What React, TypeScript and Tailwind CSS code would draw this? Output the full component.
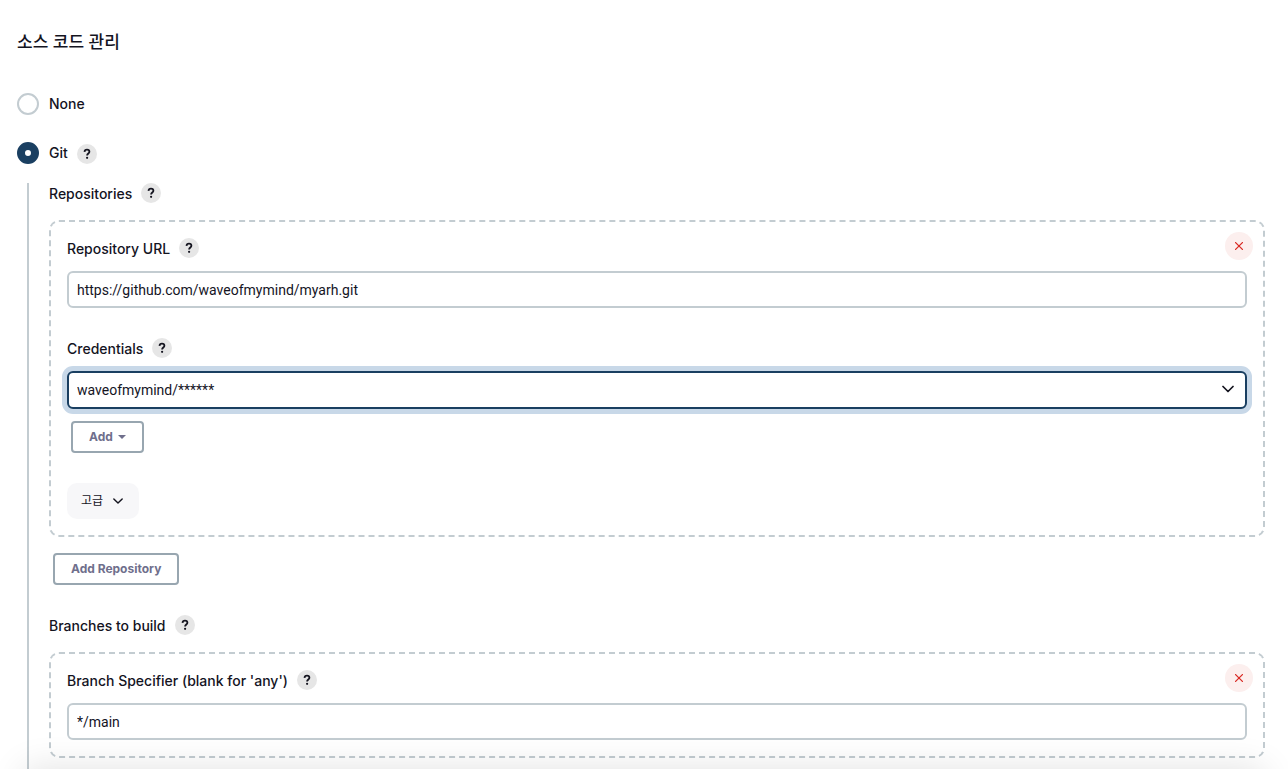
import { useState } from 'react';
import type { ReactNode } from 'react';

function HelpButton({ topic }: { topic: string }) {
  return (
    <button
      type="button"
      aria-label={`Help for feature: ${topic}`}
      className="flex h-5 w-5 items-center justify-center rounded-full bg-[#e6e6e6] text-[#14141f]"
    >
      <svg viewBox="0 0 20 20" className="h-5 w-5" fill="none" stroke="currentColor" strokeWidth="1.8">
        <path d="M7.5 7.900c.1-1.500 1.100-2.300 2.500-2.300s2.400.8 2.400 2.100c0 1.800-2.300 1.900-2.300 3.900" />
        <circle cx="10.100" cy="13.800" r="1.100" fill="currentColor" stroke="none" />
      </svg>
    </button>
  );
}

function DeleteButton() {
  return (
    <button
      type="button"
      aria-label="Delete"
      className="-mr-1.5 flex h-7 w-7 shrink-0 items-center justify-center rounded-full bg-[#fcefee] text-[#d92b25]"
    >
      <svg viewBox="0 0 8 8" className="h-2 w-2" fill="none" stroke="currentColor" strokeWidth="1.3" strokeLinecap="round">
        <path d="M.6.6l6.800 6.800M7.400.6L.6 7.400" />
      </svg>
    </button>
  );
}

function ChevronDown({ className }: { className: string }) {
  return (
    <svg viewBox="0 0 12 12" className={className} fill="none" stroke="currentColor" strokeWidth="1.7" strokeLinecap="round" strokeLinejoin="round">
      <path d="M1 3.500l5 5 5-5" />
    </svg>
  );
}

function Field({ id, label, onDelete, children }: { id: string; label: string; onDelete?: boolean; children: ReactNode }) {
  return (
    <div>
      <div className="flex h-[39px] items-start justify-between">
        <div className="flex h-[26px] items-end gap-[9px]">
          <label htmlFor={id} className="font-medium leading-[18px]">{label}</label>
          <HelpButton topic={label} />
        </div>
        {onDelete && <DeleteButton />}
      </div>
      {children}
    </div>
  );
}

const radioClass =
  'h-[22px] w-[22px] appearance-none rounded-full border-2 border-[#c3ccd1] bg-white checked:border-8 checked:border-[#1a3f61]';
const inputClass =
  "block h-[37px] w-full rounded-md border-2 border-[#c3ccd1] bg-white px-2 font-['Roboto',sans-serif] outline-none";
const boxClass = 'rounded-[10px] border-2 border-dashed border-[#c3ccd1] px-4 pt-2.5 pb-4';
const outlineButtonClass =
  'flex h-8 items-center rounded-sm border-2 border-[#98a6b0] bg-white px-4 text-xs font-bold text-[#6f6f8c]';

export default function App() {
  const [scm, setScm] = useState('git');
  const [url, setUrl] = useState('https://github.com/waveofmymind/myarh.git');
  const [branch, setBranch] = useState('*/main');

  return (
    <main className="flex min-h-screen flex-col overflow-hidden bg-white pr-[23px] pl-[17px] font-['Inter','Noto_Sans_CJK_KR',sans-serif] text-sm leading-5 text-[#14141f]">
      <h1 className="pt-[30px] text-[17px] leading-6 font-medium">소스 코드 관리</h1>

      <div className="mt-[39px] flex h-[22px] items-center gap-2.5">
        <input id="scm-none" type="radio" name="scm" className={radioClass} checked={scm === 'none'} onChange={() => setScm('none')} />
        <label htmlFor="scm-none" className="font-medium">None</label>
      </div>
      <div className="mt-[27px] flex h-[22px] items-end">
        <input id="scm-git" type="radio" name="scm" className={radioClass} checked={scm === 'git'} onChange={() => setScm('git')} />
        <label htmlFor="scm-git" className="mr-[9px] ml-2.5 font-medium leading-[22px]">Git</label>
        <HelpButton topic="Git" />
      </div>

      <div className="mt-[19px] ml-2.5 flex-1 border-l-2 border-[#c3ccd1] pb-[11px] pl-5">
        <div className="flex items-end gap-[9px]">
          <h2 className="font-medium leading-[18px]">Repositories</h2>
          <HelpButton topic="Repositories" />
        </div>
        <section className={`mt-[17px] ${boxClass}`}>
          <Field id="repo-url" label="Repository URL" onDelete>
            <input id="repo-url" type="text" className={inputClass} value={url} onChange={(e) => setUrl(e.target.value)} />
          </Field>
          <div className="mt-6">
            <Field id="credentials" label="Credentials">
              <div className="relative">
                <select
                  id="credentials"
                  className="block h-[38px] w-full appearance-none rounded-md border-2 border-[#1a3f61] bg-white px-2 font-['Roboto',sans-serif] ring-5 ring-[#c8d8e8] outline-none"
                >
                  <option>waveofmymind/******</option>
                </select>
                <ChevronDown className="pointer-events-none absolute top-3 right-[13px] h-3 w-3" />
              </div>
            </Field>
          </div>
          <button type="button" className={`mt-3 ml-1 gap-[5px] ${outlineButtonClass}`}>
            Add
            <svg viewBox="0 0 8 4" className="h-1 w-2" fill="currentColor">
              <path d="M0 0h8L4 4z" />
            </svg>
          </button>
          <button type="button" className="mt-[30px] flex h-9 items-center gap-2.5 rounded-[10px] bg-[#f7f7f9] pr-4 pl-3.5 text-xs">
            고급
            <ChevronDown className="h-2.5 w-2.5" />
          </button>
        </section>
        <button type="button" className={`mt-4 ml-1 ${outlineButtonClass}`}>Add Repository</button>

        <div className="mt-[30px] flex items-end gap-[9px]">
          <h2 className="font-medium leading-[18px]">Branches to build</h2>
          <HelpButton topic="Branches to build" />
        </div>
        <section className={`mt-[17px] ${boxClass}`}>
          <Field id="branch" label="Branch Specifier (blank for 'any')" onDelete>
            <input id="branch" type="text" className={inputClass} value={branch} onChange={(e) => setBranch(e.target.value)} />
          </Field>
        </section>
      </div>

      {/* shadow of the save bar below the fold */}
      <div className="pointer-events-none fixed inset-x-6 top-full h-12 shadow-[0_0_36px_rgba(0,0,0,0.12)]" />
    </main>
  );
}
